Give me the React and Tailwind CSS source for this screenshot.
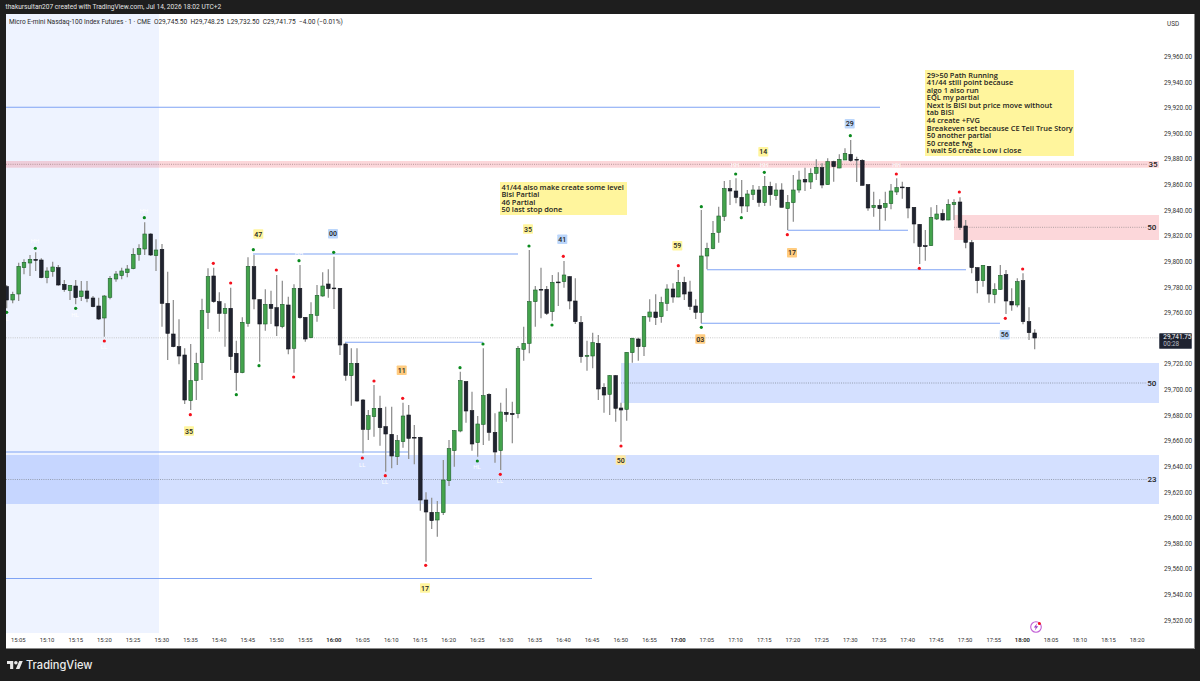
const CH = [
  [0, 220, [
    [20,195,200,240,265,'d'],[38,215,223,240,250,'g'],[56,128,139,222,243,'g'],[72,118,127,143,163,'g'],[90,105,118,129,168,'g'],
    [107,97,118,121,153,'d'],[124,115,120,173,175,'d'],[141,142,153,173,190,'g'],[158,125,141,155,170,'g'],[175,135,143,195,197,'d'],
    [193,180,193,209,215,'d'],[210,195,197,212,240,'g'],[227,180,198,233,253,'d'],[244,183,213,230,243,'g'],[261,183,213,235,247,'d'],
    [279,228,234,260,262,'d'],[296,233,258,297,300,'d'],[313,225,228,294,350,'g'],[330,168,175,232,238,'g'],[348,153,162,177,185,'g'],
    [365,143,153,167,178,'g'],[382,135,147,158,172,'g'],[400,85,103,146,148,'g'],[417,73,86,103,122,'g'],[434,7,42,87,105,'g'],
    [452,40,42,105,108,'d'],[468,58,90,107,153,'g'],[486,72,88,250,320,'d'],[503,155,250,340,420,'d'],[520,240,342,380,382,'d'],
    [537,298,380,408,433,'d'],[554,385,405,540,552,'d'],[572,372,482,542,570,'g'],[589,398,430,482,540,'g'],[606,236,272,428,480,'g'],
    [624,145,170,277,327,'g'],[641,143,168,245,248,'d'],[658,217,245,280,335,'d'],[675,250,265,280,380,'g'],[692,203,265,410,450,'d'],
    [709,362,400,458,512,'d'],[727,292,307,458,460,'g'],[744,112,139,310,320,'g'],[762,105,140,237,268,'d'],[779,238,239,312,425,'d'],
    [796,208,253,312,332,'g'],[813,212,253,265,312,'d'],[830,165,263,318,348,'d'],[847,182,253,320,325,'g'],[865,230,255,387,403,'d'],
    [882,193,206,385,458,'g'],
  ]],
  [300, 220, [
    [0,135,205,293,296,'d'],[16,292,292,357,365,'d'],[33,247,284,353,355,'g'],[51,195,226,286,305,'g'],[68,157,198,228,230,'g'],
    [85,148,192,206,233,'d'],[102,110,204,206,267,'d'],[120,205,205,375,405,'d'],[137,368,372,466,482,'d'],[154,385,430,467,557,'g'],
    [171,385,430,543,545,'d'],[189,537,540,628,700,'d'],[205,570,587,628,660,'g'],[222,495,565,590,650,'g'],[240,527,565,623,677,'d'],
    [257,560,620,642,755,'d'],[275,560,643,708,745,'d'],[292,645,662,710,735,'g'],[309,548,588,665,683,'g'],[326,555,585,655,717,'d'],
    [343,615,652,654,733,'d'],[361,650,652,840,872,'d'],[378,817,840,876,1025,'d'],[395,833,877,902,927,'d'],[412,843,877,900,950,'g'],
    [430,720,780,878,885,'g'],[447,660,686,782,798,'g'],[463,630,632,692,740,'g'],[481,455,482,633,637,'g'],[498,483,485,573,608,'d'],
    [516,515,572,672,692,'d'],[533,588,612,668,710,'g'],[550,385,527,613,675,'g'],[567,520,523,637,662,'d'],[585,580,637,696,728,'d'],
    [602,548,576,692,750,'g'],[619,505,577,583,605,'d'],[637,545,580,584,670,'d'],[654,378,385,581,595,'g'],[671,320,370,388,422,'g'],
    [688,90,245,370,400,'g'],[706,198,210,245,320,'g'],[723,143,208,210,295,'d'],[740,198,208,280,285,'d'],[757,165,187,275,302,'g'],
    [775,157,186,188,258,'d'],[792,123,165,185,203,'g'],[809,168,170,243,268,'d'],[826,175,243,305,312,'d'],[843,288,308,410,428,'d'],
    [861,362,406,409,452,'g'],[878,338,368,408,445,'g'],[895,345,370,507,540,'d'],
  ]],
  [590, 330, [
    [42,160,172,195,248,'d'],[59,135,137,193,255,'g'],[77,135,137,235,275,'d'],[93,218,234,240,335,'d'],[110,67,67,238,272,'g'],
  ]],
  [590, 170, [
    [127,503,505,548,578,'g'],[145,503,507,530,572,'d'],[162,438,440,530,558,'g'],[179,388,426,441,455,'g'],[197,373,426,443,465,'d'],
    [214,380,398,440,458,'g'],[231,343,357,400,423,'g'],[249,340,357,381,398,'d'],[265,300,337,381,382,'g'],[283,320,337,372,390,'d'],
    [300,332,366,409,420,'d'],[317,388,408,427,447,'d'],[334,120,258,427,460,'g'],[351,218,236,258,298,'g'],[369,153,190,236,238,'g'],
    [386,110,138,187,218,'g'],
  ]],
  [720, 120, [
    [13,183,206,289,303,'g'],[30,180,206,213,255,'d'],[48,175,213,232,250,'d'],[65,180,232,258,280,'d'],[82,210,222,258,276,'g'],
    [99,195,210,223,240,'g'],[117,198,210,247,260,'d'],[134,168,199,248,258,'g'],[151,185,199,224,257,'d'],[168,190,210,227,240,'g'],
    [185,190,210,262,262,'d'],[203,225,247,266,330,'g'],[220,165,210,248,305,'g'],[237,152,180,210,218,'g'],[255,143,178,186,213,'d'],
    [272,145,160,186,207,'g'],[289,118,142,160,180,'g'],[306,130,143,195,205,'d'],[323,115,125,194,195,'g'],[341,122,125,140,185,'d'],
    [358,103,118,144,145,'g'],[375,85,100,120,120,'g'],[392,60,103,122,125,'d'],[410,110,118,120,186,'d'],[427,118,121,196,196,'d'],
    [444,193,194,264,272,'d'],[461,215,256,263,290,'g'],[479,238,256,266,330,'d'],[496,215,250,262,302,'g'],[513,192,213,251,268,'g'],
    [530,175,203,216,225,'g'],[547,185,201,203,236,'d'],[564,201,202,264,295,'d'],[582,262,262,312,370,'d'],[599,312,313,380,432,'d'],
    [616,330,377,380,422,'d'],[633,262,292,377,378,'g'],[650,255,282,297,300,'g'],[668,268,280,300,302,'d'],[685,238,253,300,301,'g'],
    [702,238,248,254,300,'g'],[720,232,246,322,330,'d'],[737,300,318,367,385,'d'],
  ]],
  [880, 190, [
    [275,150,158,233,250,'d'],[292,232,233,272,310,'d'],[309,225,226,272,290,'g'],[327,228,229,312,338,'d'],[344,280,298,314,340,'g'],
    [361,225,256,298,300,'g'],[378,240,254,333,372,'d'],[395,295,334,345,362,'d'],[412,265,275,345,352,'g'],[429,250,272,395,403,'d'],
    [447,352,395,428,450,'d'],[464,418,429,444,478,'d'],
  ]],
];

const DOTS = [
  [0,220,[['g',20,277],['g',106,85],['g',227,265],['r',313,363],['r',640,130],['r',692,189],['r',571,584],['g',760,89],['g',709,524],['g',777,437],['r',829,150],['r',881,471],['g',897,122]]],
  [300,220,[['g',101,97],['r',222,483],['r',308,535],['g',480,443],['g',549,372],['g',687,78],['r',790,109],['g',756,315]]],
  [300,400,[['r',187,174],['r',256,227],['g',532,183],['r',601,223],['r',377,496]]],
  [590,170,[['g',334,110],['r',265,287],['g',334,472],['g',437,12],['g',523,7],['g',454,143],['r',592,194]]],
  [720,120,[['g',391,47],['r',529,162],['r',718,216],['r',598,445]]],
  [880,190,[['r',376,385],['r',428,237]]],
  [590,330,[['r',93,348]]],
  [0,0,[['g',433,653]]],
];

const LINES = [
  [6,880,107.3],[253,518,254],[345,483,342.3],[6,408,452],[6,592,578.5],[787.7,908,230.3],[707,966,269.7],[701,1000,323.3],
];

const TINY = [
  ['HH',35,241],['HL',75,315],['LL',104,347],['L',7,319],['HH',144,211],['LL',362.3,464.7],['LL',385,482],['HL',477,467],['LL',500,480.7],
  ['HH',735,165],['HH',764,165],['HH',896.5,165],['HH',299,254],
];

const YEL = '#fff59d';
const BLU = '#bbd6fb';
const ORA = '#ffcc80';
const BADGES = [
  ['47',258.3,234,YEL],['00',333,233.7,BLU],['35',528,229,YEL],['41',562.3,239.3,BLU],['11',401.7,370.3,ORA],
  ['35',189,431,YEL],['50',620.7,460,'#ffe9a0'],['17',425,588,YEL],['59',677.3,245.7,YEL],['17',792,252.7,ORA],
  ['03',700.3,339,ORA],['14',763.3,151.7,YEL],['29',849.7,123.7,BLU],['56',1004.7,334.7,BLU],
];

const ZONE_LABELS = [['35',1153,163.7],['50',1151.7,227],['50',1151.7,382.7],['23',1152,479.5]];

const PRICES = ['29,960.00','29,940.00','29,920.00','29,900.00','29,880.00','29,860.00','29,840.00','29,820.00','29,800.00','29,780.00','29,760.00','','29,720.00','29,700.00','29,680.00','29,660.00','29,640.00','29,620.00','29,600.00','29,580.00','29,560.00','29,540.00','29,520.00'];

const TIMES = ['15:05','15:10','15:15','15:20','15:25','15:30','15:35','15:40','15:45','15:50','15:55','16:00','16:05','16:10','16:15','16:20','16:25','16:30','16:35','16:40','16:45','16:50','16:55','17:00','17:05','17:10','17:15','17:20','17:25','17:30','17:35','17:40','17:45','17:50','17:55','18:00','18:05','18:10','18:15','18:20'];

function Candle({ x, wt, bt, bb, wb, c }) {
  const up = c === 'g';
  return (
    <g>
      <line x1={x} x2={x} y1={wt} y2={wb} stroke="#929292" strokeWidth="1.3" />
      <rect x={x - 1.8} y={bt} width="3.6" height={Math.max(bb - bt, 0.8)} fill={up ? '#43a34c' : '#20232f'} stroke={up ? '#1f5f2c' : '#15171f'} strokeWidth="0.6" />
    </g>
  );
}

function Chart() {
  return (
    <svg className="block h-full w-full" viewBox="6 14 1153 619">
      <rect x="6" y="14" width="153" height="619" fill="#2962ff" fillOpacity="0.08" />
      <rect x="6" y="161" width="1153" height="6.7" fill="#f23645" fillOpacity="0.2" />
      <rect x="954" y="215" width="205" height="25" fill="#f23645" fillOpacity="0.2" />
      <rect x="621" y="363" width="538" height="40" fill="#2962ff" fillOpacity="0.2" />
      <rect x="6" y="455" width="1153" height="49" fill="#2962ff" fillOpacity="0.2" />
      <line x1="6" x2="1159" y1="337.8" y2="337.8" stroke="#c4c4c4" strokeWidth="0.9" strokeDasharray="1 1.2" />
      <line x1="6" x2="1147" y1="164.3" y2="164.3" stroke="#b08f94" strokeWidth="0.9" strokeDasharray="1 1.2" />
      <line x1="954" x2="1147" y1="227.3" y2="227.3" stroke="#a99a9c" strokeWidth="0.9" strokeDasharray="1 1.2" />
      <line x1="621" x2="1147" y1="383" y2="383" stroke="#8f97a8" strokeWidth="0.9" strokeDasharray="1 1.2" />
      <line x1="6" x2="1147" y1="479.5" y2="479.5" stroke="#8f97a8" strokeWidth="0.9" strokeDasharray="1 1.2" />
      {LINES.map(([a, b, y], i) => (
        <line key={i} x1={a} x2={b} y1={y} y2={y} stroke="#7fa3f4" strokeWidth="1.1" />
      ))}
      {CH.flatMap(([ox, oy, bars], i) =>
        bars.map(([x, wt, bt, bb, wb, c], j) => (
          <Candle key={`${i}-${j}`} x={ox + x / 3} wt={oy + wt / 3} bt={oy + bt / 3} bb={oy + bb / 3} wb={oy + wb / 3} c={c} />
        ))
      )}
      {DOTS.flatMap(([ox, oy, ds], i) =>
        ds.map(([c, x, y], j) => (
          <circle key={`${i}-${j}`} cx={ox + x / 3} cy={oy + y / 3} r="1.6" fill={c === 'g' ? '#0a8a1e' : '#f5101c'} />
        ))
      )}
      {TINY.map(([t, x, y], i) => (
        <text key={i} x={x} y={y + 2} textAnchor="middle" fontSize="6" fontFamily="Roboto, sans-serif" fill="#ffffff">{t}</text>
      ))}
      {BADGES.map(([t, x, y, bg], i) => (
        <g key={i}>
          <rect x={x - 5} y={y - 4.8} width="10" height="9.6" rx="0.8" fill={bg} />
          <text x={x} y={y + 2.5} textAnchor="middle" fontSize="7" fontWeight="500" fontFamily="Roboto, sans-serif" fill="#222">{t}</text>
        </g>
      ))}
      {ZONE_LABELS.map(([t, x, y], i) => (
        <text key={i} x={x} y={y + 2.9} textAnchor="middle" fontSize="8" fontWeight="500" fontFamily="Roboto, sans-serif" fill="#222">{t}</text>
      ))}
    </svg>
  );
}

function Note({ className, lines }) {
  return (
    <div className={`absolute bg-[#fff59d] pl-[1.5px] pt-[1.5px] font-['Open_Sans',sans-serif] text-[7.4px] font-semibold leading-[7.6px] text-[#1c1c1c] ${className}`}>
      {lines.map((l, i) => (
        <div key={i} className="whitespace-nowrap">{l}</div>
      ))}
    </div>
  );
}

export default function App() {
  return (
    <div className="flex h-[681px] w-[1200px] flex-col overflow-hidden bg-[#1e1e1e] font-['Roboto',sans-serif]">
      <header className="flex h-[14px] shrink-0 items-center pl-[5.5px] text-[6.6px] leading-none text-[#e4e4e4]">
        thakursultan207 created with TradingView.com, Jul 14, 2026 18:02 UTC+2
      </header>
      <main className="ml-[6px] flex h-[635px] w-[1189px] shrink-0 flex-col border-r border-b border-[#8a8a8a] bg-white">
        <div className="flex h-[619px] shrink-0">
          <div className="relative h-full w-[1153px] shrink-0">
            <Chart />
            <div className="absolute left-[3px] top-[4px] whitespace-pre text-[6.55px] leading-[8px] text-[#2a2a2a]">
              {'Micro E-mini Nasdaq-100 Index Futures · 1 · CME  O29,745.50  H29,748.25  L29,732.50  C29,741.75  −4.00 (−0.01%)'}
            </div>
            <Note
              className="left-[494px] top-[168px] h-[33px] w-[127px]"
              lines={['41/44 also make create some level', 'Bisi Partial', '46 Partial', '50 last stop done']}
            />
            <Note
              className="left-[919.3px] top-[56px] h-[86px] w-[149px]"
              lines={['29>50 Path Running', '41/44 still point because', 'algo 1 also run', 'EQL my partial', 'Next is BISI but price move without', 'tab BISI', '44 create +FVG', 'Breakeven set because CE Tell True Story', '50 another partial', '50 create fvg', 'i wait 56 create Low i close']}
            />
            <svg className="absolute left-[1022.5px] top-[606px] h-[14px] w-[14px]" viewBox="0 0 14 14">
              <circle cx="7" cy="7" r="5.3" fill="none" stroke="#c25fd6" strokeWidth="1.1" />
              <path d="M8 3.4 4.8 7.6h2l-1 3 3.4-4.3H7.2z" fill="#9b3fc4" />
              <circle cx="10.4" cy="3.4" r="1.5" fill="#f5101c" />
            </svg>
          </div>
          <div className="relative h-full w-[35px] shrink-0 overflow-hidden text-[#333]">
            <div className="h-[30.3px] pl-[8px] pt-[6px] text-[6.4px] leading-[8px]">USD</div>
            {PRICES.map((p, i) => (
              <div key={i} className="flex h-[25.63px] shrink-0 items-center pl-[5px] text-[6.4px] leading-none">
                {p}
              </div>
            ))}
            <div className="absolute left-[0.3px] top-[319px] flex h-[16.4px] w-[33px] flex-col justify-center rounded-[1px] border border-[#555a66] bg-[#1e2230] pl-[3px] text-[6.4px] leading-[7.6px] text-white">
              <span>29,741.75</span>
              <span className="text-[#b9bcc4]">00:28</span>
            </div>
          </div>
        </div>
        <div className="-ml-[2px] flex h-[15px] shrink-0 items-center text-[5.9px] leading-none text-[#333]">
          {TIMES.map((t) => (
            <span key={t} className={`w-[28.69px] shrink-0 text-center ${t.endsWith(':00') ? 'font-semibold text-[#222]' : ''}`}>{t}</span>
          ))}
        </div>
      </main>
      <footer className="flex flex-1 items-start gap-[3.5px] pl-[6.5px] pt-[8px]">
        <svg className="mt-[4px] h-[8px] w-[16px] shrink-0" viewBox="0 4 36 18" fill="#e8e8e8">
          <path d="M14 22H7V11H0V4h14v18zM28 22h-8l7.5-18h8L28 22z" />
          <circle cx="20" cy="8" r="4" />
        </svg>
        <span className="font-['Inter',sans-serif] text-[11.1px] font-medium leading-[16px] text-[#ececec]">TradingView</span>
      </footer>
    </div>
  );
}
